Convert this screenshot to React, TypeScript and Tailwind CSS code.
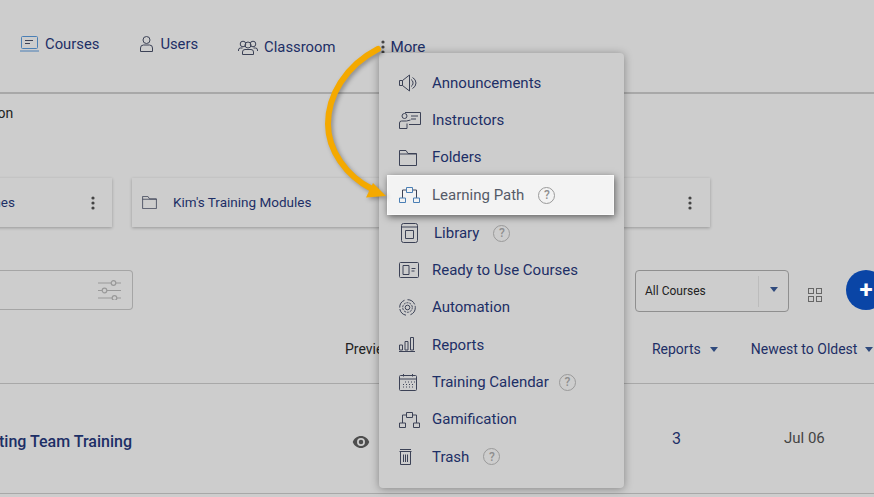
import type { ReactNode } from 'react';

const ink = '#3c4256';
const blue = '#4a7fb5';

const Svg = ({ w = 20, h = 20, children }: { w?: number; h?: number; children: ReactNode }) => (
  <svg width={w} height={h} viewBox={`0 0 ${w} ${h}`} fill="none" stroke={ink} strokeWidth="1" className="shrink-0">
    {children}
  </svg>
);

const Help = ({ tight }: { tight?: boolean }) => (
  <span className={`flex h-[17px] w-[17px] items-center justify-center rounded-full border border-[#9a9a9a] text-[12px] font-medium leading-none text-[#8f8f8f] ${tight ? 'ml-[10px]' : 'ml-[14px]'}`}>
    ?
  </span>
);

const Caret = () => (
  <svg width="8" height="5" viewBox="0 0 8 5" className="shrink-0">
    <path d="M0 0h8L4 5z" fill="#2f4a7d" />
  </svg>
);

const Announce = () => (
  <Svg w={19} h={18}>
    <path d="M.5 6.500h3v5h-3zM3.500 6.500 10.500 1v16l-7-5.500" />
    <path d="M12 5.500a4 4 0 0 1 0 7M13.500 3.500a6.500 6.500 0 0 1 3.500 5.500 6.500 6.500 0 0 1-3.500 5.500" />
  </Svg>
);

const Instructors = () => (
  <Svg w={22} h={18}>
    <circle cx="5.500" cy="5" r="2.500" />
    <path d="M.5 17.500v-5.500q0-2 2-2h5l4-1M.5 17.500h7.500v-5" />
    <path d="M6 1.500h15.500v12H10M12 5h7M12 8h5" />
  </Svg>
);

const Folder = ({ w = 18, h = 16 }: { w?: number; h?: number }) => (
  <svg width={w} height={h} viewBox="0 0 18 16" fill="none" stroke={ink} className="shrink-0">
    <path d="M.5 15.500V.5h6.500l2 3h8.500v12zM.5 4h17" />
  </svg>
);

const PathIcon = ({ stroke = blue, box = ink }: { stroke?: string; box?: string }) => (
  <svg width="21" height="16" viewBox="0 0 21 16" fill="none" className="shrink-0">
    <path d="M7 3H3.500v8M14 3h3.500v8" stroke={box} />
    <path d="M7.500.5h6v5h-6zM.5 11h6v4.500h-6zM14.500 11h6v4.500h-6z" stroke={stroke} />
  </svg>
);

const LibraryIcon = () => (
  <Svg w={17} h={20}>
    <path d="M.5 2.500q0-2 2-2h12q2 0 2 2v15q0 2-2 2h-12q-2 0-2-2zM.5 4h16" />
    <path d="M4.500 7.500h8v8h-8z" />
  </Svg>
);

const Ready = () => (
  <Svg w={20} h={16}>
    <rect x=".5" y=".5" width="19" height="15" rx="1" />
    <path d="M4 3.500h6v9H4zM12.500 6.500h4M12.500 9h3" />
  </Svg>
);

const Automation = () => (
  <Svg w={17} h={17}>
    <path d="M8.500.7a7.800 7.800 0 0 1 7.800 7.800M16.300 8.500a7.800 7.800 0 0 1-6 7.600M7 16.200a7.800 7.800 0 0 1-6.300-7.700M.7 8.500A7.800 7.800 0 0 1 6 1.100" strokeDasharray="9 1.500" />
    <circle cx="8.500" cy="8.500" r="4.800" strokeDasharray="2 1" />
    <circle cx="8.500" cy="8.500" r="2.300" />
  </Svg>
);

const Bars = () => (
  <Svg w={16} h={15}>
    <path d="M.5 8h3v5h-3zM6 4.500h3V13H6zM11.500.5h3V13h-3zM0 14.500h16" />
  </Svg>
);

const Calendar = () => (
  <Svg w={18} h={17}>
    <rect x=".5" y="1.500" width="17" height="15" rx="1" />
    <path d="M.5 5h17M4.500 0v2.500M13.500 0v2.500" />
    <path d="M6 8h1M9 8h1M12 8h1M15 8h1M4 10.500h1M7 10.500h1M10 10.500h1M13 10.500h1M4 13h1M7 13h1M10 13h1M13 13h1" strokeWidth="1.200" />
  </Svg>
);

const TrashIcon = () => (
  <Svg w={13} h={17}>
    <path d="M.5 3.500h12M1.500 3.500v13h10v-13M1 1.500h11" />
    <path d="M4.500 6.500V14M6.500 6.500V14M8.500 6.500V14" />
  </Svg>
);

const items: { label: string; icon: ReactNode; help?: boolean; tight?: boolean; indent?: boolean; active?: boolean }[] = [
  { label: 'Announcements', icon: <Announce /> },
  { label: 'Instructors', icon: <Instructors /> },
  { label: 'Folders', icon: <Folder /> },
  { label: 'Learning Path', icon: <PathIcon />, help: true, active: true },
  { label: 'Library', icon: <LibraryIcon />, help: true, indent: true },
  { label: 'Ready to Use Courses', icon: <Ready /> },
  { label: 'Automation', icon: <Automation /> },
  { label: 'Reports', icon: <Bars /> },
  { label: 'Training Calendar', icon: <Calendar />, help: true, tight: true },
  { label: 'Gamification', icon: <PathIcon stroke={ink} /> },
  { label: 'Trash', icon: <TrashIcon />, help: true },
];

const Card = ({ className, children }: { className: string; children: ReactNode }) => (
  <div className={`flex h-[49px] shrink-0 items-center bg-[#cdcdcd] shadow-[0_1px_3px_rgba(0,0,0,0.25)] ${className}`}>
    {children}
  </div>
);

const Dots = () => (
  <svg width="4" height="14" viewBox="0 0 4 14" fill="#444" className="shrink-0">
    <circle cx="2" cy="2" r="1.600" />
    <circle cx="2" cy="7" r="1.600" />
    <circle cx="2" cy="12" r="1.600" />
  </svg>
);

const Menu = () => (
  <div className="absolute left-[379px] top-[53px] z-10 h-[435px] w-[245px] rounded-[4px] bg-[#cdcdcd] pt-[11.500px] shadow-[0_1px_8px_rgba(0,0,0,0.35)]">
    {items.map((item) => (
      <div
        key={item.label}
        className={
          item.active
            ? 'relative z-10 my-[-1px] ml-[8px] mr-[10px] flex h-[40px] items-center border border-[#fafafa] bg-[#f3f3f3] pl-[11px] text-[#555b68] shadow-[1px_2px_7px_rgba(0,0,0,0.55)]'
            : 'flex h-[37.300px] items-center pl-[20px] text-[#1d2f66]'
        }
      >
        <div className={`flex w-[33px] shrink-0 items-center ${item.indent ? 'pl-[2px]' : ''}`}>{item.icon}</div>
        <span className={`text-[15px] ${item.indent ? 'ml-[2px]' : ''}`}>{item.label}</span>
        {item.help && <Help tight={item.tight} />}
      </div>
    ))}
  </div>
);

const Arrow = () => (
  <svg width="90" height="170" viewBox="320 40 90 170" className="pointer-events-none absolute left-[320px] top-[40px] z-20 drop-shadow-[2px_2px_2px_rgba(0,0,0,0.3)]">
    <path d="M378 49C345 66 328 96 328 124C328 150 346 176 372 189" fill="none" stroke="#f4a900" strokeWidth="6" strokeLinecap="round" />
    <path d="M386 196L366 197.500L373 183z" fill="#f4a900" />
  </svg>
);

export default function App() {
  return (
    <div className="relative h-[497px] w-[874px] overflow-hidden bg-[#cdcdcd] font-['Roboto',sans-serif] text-[#1d2f66]">
      {/* Nav */}
      <div className="flex h-[94px] border-b-2 border-[#a8a8a8] text-[14.800px]">
        <div className="ml-[20px] mt-[34px] flex h-[20px] items-center gap-[6px]">
          <svg width="19" height="16" viewBox="0 0 19 16" fill="none" stroke={blue} className="shrink-0">
            <rect x="1.500" y=".5" width="16" height="12" rx="1" />
            <path d="M5 4.500h8M5 7.500h5" stroke={ink} />
            <path d="M0 15h19" />
          </svg>
          <span>Courses</span>
        </div>
        <div className="ml-[41px] mt-[34px] flex h-[20px] items-center gap-[7px]">
          <svg width="13" height="16" viewBox="0 0 13 16" fill="none" stroke={ink} className="shrink-0">
            <circle cx="6.500" cy="4" r="3.500" />
            <path d="M.5 15.500V12q0-3 3-3h6q3 0 3 3v3.500z" />
          </svg>
          <span>Users</span>
        </div>
        <div className="ml-[40px] mt-[37px] flex h-[20px] items-center gap-[6px]">
          <svg width="20" height="16" viewBox="0 0 20 16" fill="none" stroke={ink} className="shrink-0">
            <circle cx="5" cy="5" r="2.800" />
            <circle cx="15" cy="5" r="2.800" />
            <circle cx="10" cy="6" r="3" />
            <path d="M.5 12v-1q0-2 2-2h2M19.500 12v-1q0-2-2-2h-2M4.500 15.500V13q0-2.500 2.500-2.500h6q2.500 0 2.500 2.500v2.500z" />
          </svg>
          <span>Classroom</span>
        </div>
        <div className="ml-[46px] mt-[37px] flex h-[20px] items-center gap-[5px] text-[15.200px]">
          <Dots />
          <span>More</span>
        </div>
      </div>

      {/* Section title, clipped at the left edge */}
      <div className="mt-[9px] ml-[-66px] text-[14px] leading-[20px] text-[#222]">Organization</div>

      {/* Folder cards */}
      <div className="ml-[-168px] mt-[55px] flex gap-[20px] text-[13.500px]">
        <Card className="w-[280px] justify-end gap-[17px] pr-[17px]">
          <span>Folder Names</span>
          <span className="w-[42px]" />
          <Dots />
        </Card>
        <Card className="w-[279px] pl-[10px]">
          <Folder w={15} h={13} />
          <span className="ml-[16px]">Kim&apos;s Training Modules</span>
        </Card>
        <Card className="w-[279px] justify-end pr-[18px]">
          <Dots />
        </Card>
      </div>

      {/* Filters */}
      <div className="mt-[43px] flex items-start">
        <div className="flex h-[40px] w-[133px] shrink-0 items-center justify-end rounded-r-[4px] border border-l-0 border-[#a5a5a5] pr-[11px]">
          <svg width="23" height="20" viewBox="0 0 23 20" fill="none" stroke="#999" strokeWidth="1.200" className="shrink-0">
            <path d="M0 3h13M18 3h5M0 10.500h4M9 10.500h14M0 18h14M19 18h4" />
            <circle cx="15.500" cy="3" r="2.300" />
            <circle cx="6.500" cy="10.500" r="2.300" />
            <circle cx="16.500" cy="18" r="2.300" />
          </svg>
        </div>
        <div className="ml-[502px] flex h-[42px] w-[154px] shrink-0 items-center rounded-[4px] border border-[#8f8f8f] text-[12px] text-[#222]">
          <span className="ml-[9px] flex-1">All Courses</span>
          <div className="flex h-[31px] w-[30px] items-center justify-center border-l border-[#bcbcbc] pb-[3px]">
            <Caret />
          </div>
        </div>
        <div className="ml-[19px] mt-[18px] grid shrink-0 grid-cols-2 gap-[2px]">
          <span className="h-[6px] w-[6px] border border-[#666]" />
          <span className="h-[6px] w-[6px] border border-[#666]" />
          <span className="h-[6px] w-[6px] border border-[#666]" />
          <span className="h-[6px] w-[6px] border border-[#666]" />
        </div>
        <div className="ml-[24px] flex h-[40px] w-[40px] shrink-0 items-center justify-center rounded-full bg-[#0a45a6] text-[24px] font-bold leading-none text-white">
          +
        </div>
      </div>

      {/* Table head */}
      <div className="mt-[27px] flex h-[20px] items-center text-[14px] leading-none">
        <span className="ml-[345px] text-[#222]">Preview</span>
        <span className="ml-[258px]">Reports</span>
        <span className="ml-[9px]"><Caret /></span>
        <span className="ml-[33px]">Newest to Oldest</span>
        <span className="ml-[8px]"><Caret /></span>
      </div>

      {/* Table row */}
      <div className="mt-[24px] flex h-[111px] items-center border-y border-[#a8a8a8]">
        <span className="ml-[-46px] mt-[6px] w-[400px] shrink-0 text-[16px] font-medium">Marketing Team Training</span>
        <svg width="18" height="12" viewBox="0 0 24 16" className="ml-[-2px] mt-[6px] shrink-0" fill="#4d4d4d">
          <path d="M12 0C7 0 2.700 3.300 1 8c1.700 4.700 6 8 11 8s9.300-3.300 11-8c-1.700-4.700-6-8-11-8zm0 13.300a5.300 5.300 0 1 1 0-10.600 5.300 5.300 0 0 1 0 10.600zM12 5a3 3 0 1 0 0 6 3 3 0 0 0 0-6z" />
        </svg>
        <span className="ml-[302px] mt-[1px] text-[16px]">3</span>
        <span className="ml-[103px] text-[15px] text-[#444]">Jul 06</span>
      </div>

      <Menu />
      <Arrow />
    </div>
  );
}
